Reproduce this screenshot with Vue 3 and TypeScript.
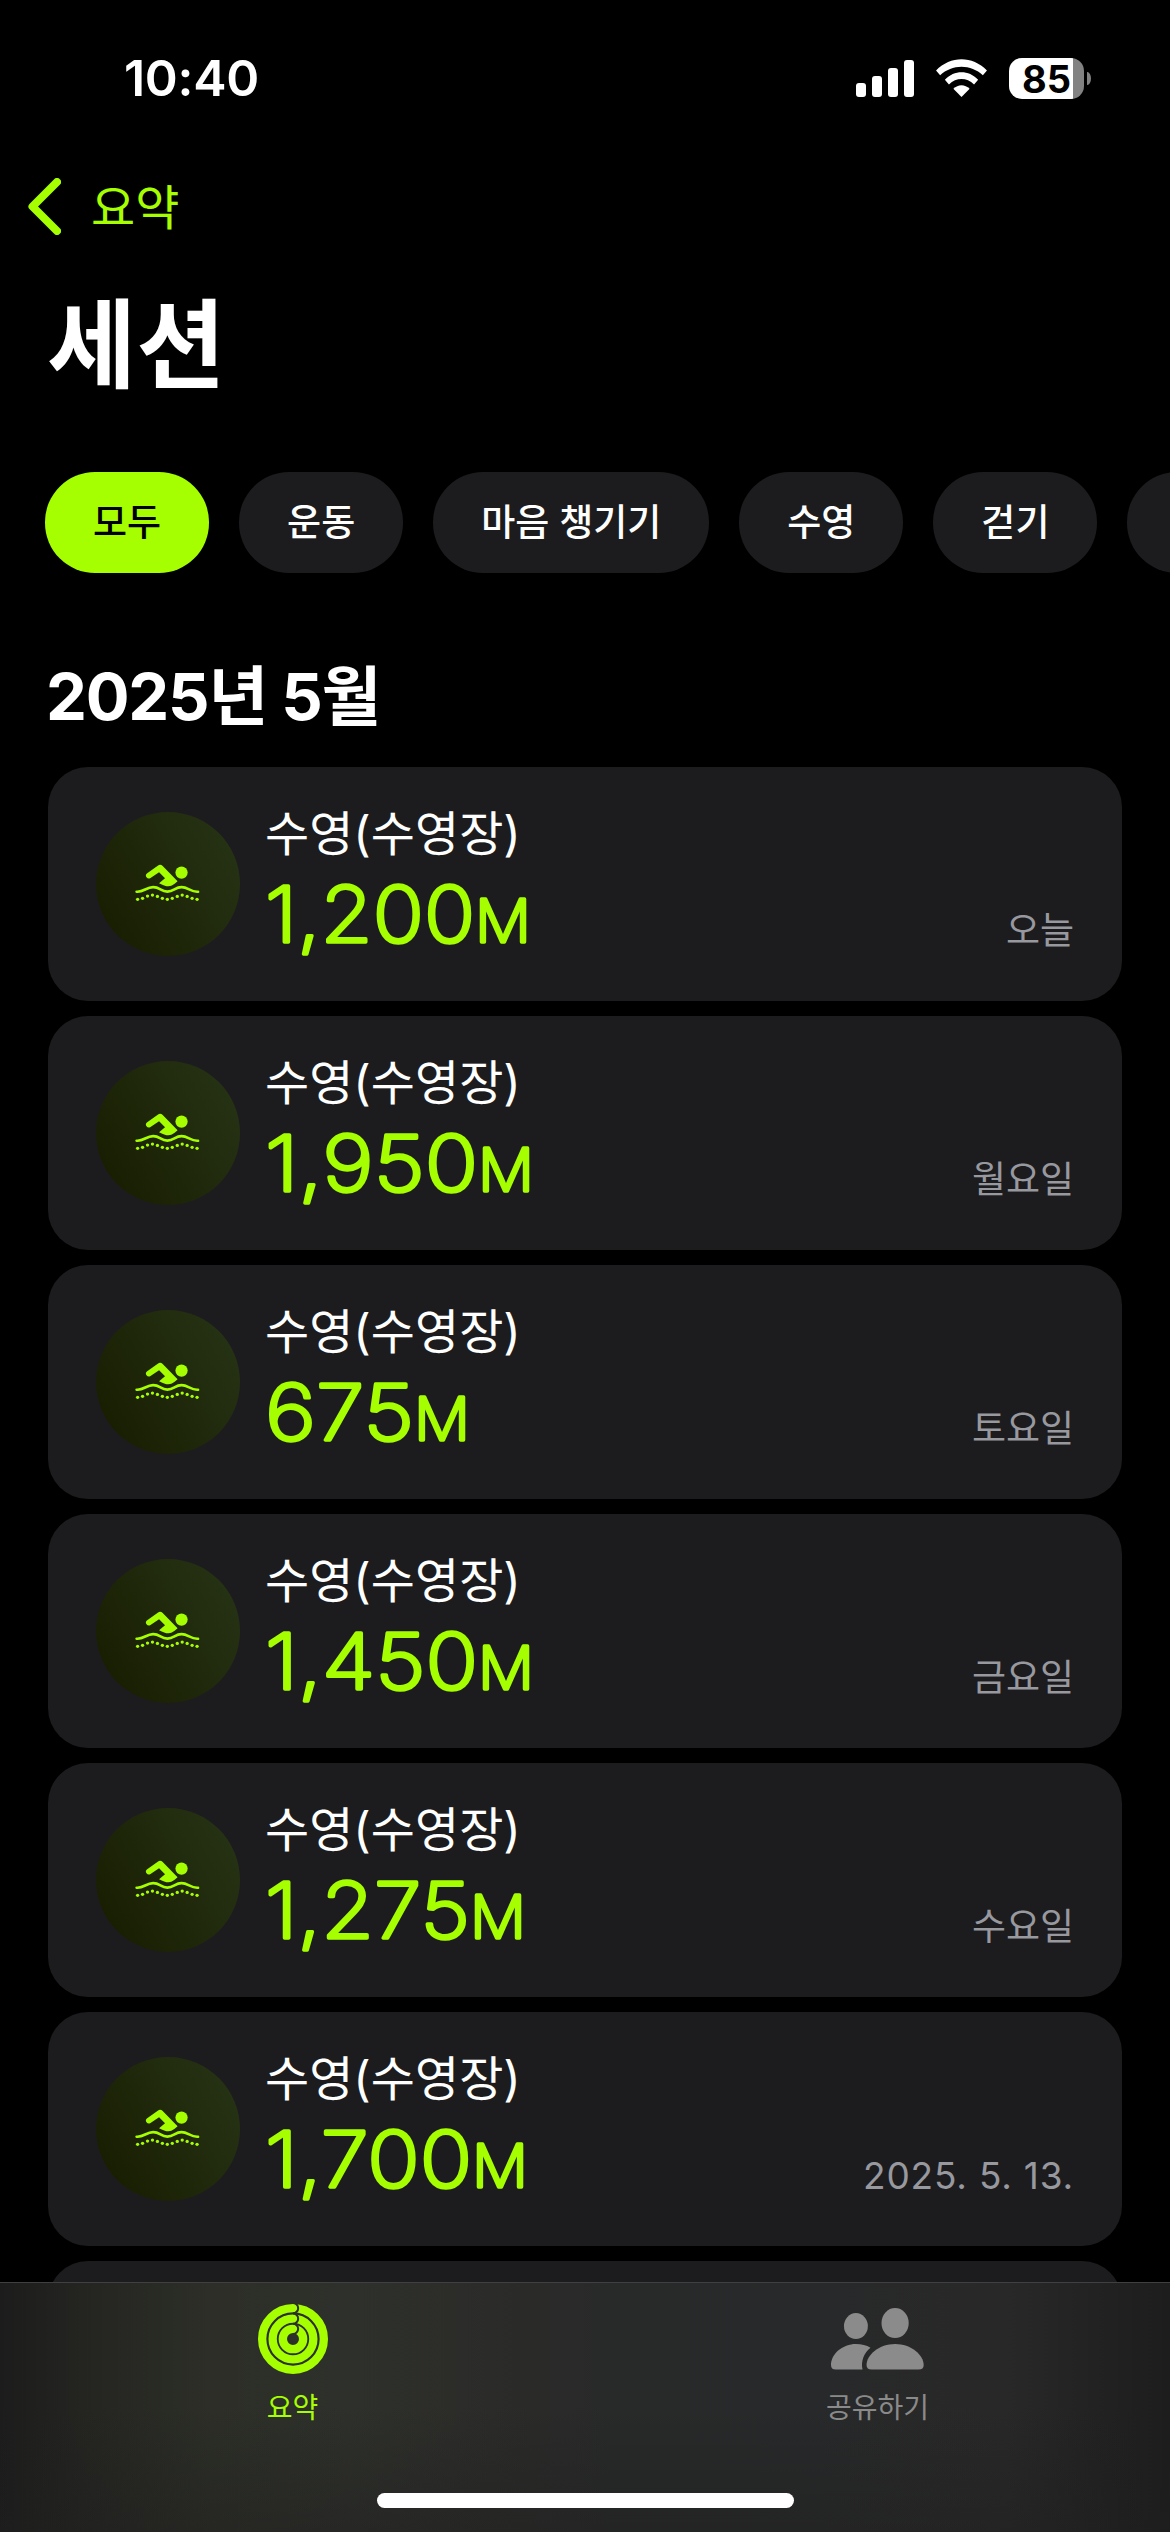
<script setup lang="ts">
interface Session {
  distance: string
  // Drawn width of the number, before the unit
  width: number
  date: string
}

const filters: string[] = ['모두', '운동', '마음 챙기기', '수영', '걷기']

const sessions: Session[] = [
  { distance: '1,200', width: 210, date: '오늘' },
  { distance: '1,950', width: 213, date: '월요일' },
  { distance: '675', width: 149, date: '토요일' },
  { distance: '1,450', width: 213, date: '금요일' },
  { distance: '1,275', width: 205, date: '수요일' },
  { distance: '1,700', width: 207, date: '2025. 5. 13.' },
]

// Dotted second wave below the swimmer: one dot every 15 units
const dotHeights: number[] = [297, 294, 287, 284, 288, 294, 297, 294, 288, 284, 288, 294, 297]
</script>

<template>
  <div class="screen">
    <header class="status">
      <span class="clock">10:40</span>
      <div class="indicators">
        <svg class="signal" viewBox="0 0 58 38">
          <rect x="0" y="24" width="10" height="14" rx="3" />
          <rect x="16" y="17" width="10" height="21" rx="3" />
          <rect x="32" y="9" width="10" height="29" rx="3" />
          <rect x="48" y="1" width="10" height="37" rx="3" />
        </svg>
        <svg class="wifi" viewBox="0 0 150 112">
          <path d="M0 34C43 -10 107 -10 150 34L138 48C103 14 47 14 12 48Z" />
          <path d="M26 61C54 32 96 32 124 61L112 75C90 54 60 54 38 75Z" />
          <path d="M51 88C65 74 85 74 99 88L75 112Z" />
        </svg>
        <div class="battery">
          <div class="cell">85</div>
          <span class="nub"></span>
        </div>
      </div>
    </header>

    <nav class="back">
      <svg viewBox="0 0 33 57"><path d="M29 4L4.5 28.5L29 53" /></svg>
      <span>요약</span>
    </nav>

    <h1 class="title">세션</h1>

    <div class="filters">
      <button v-for="(name, i) in filters" :key="name" class="chip" :class="{ active: i === 0 }">
        {{ name }}
      </button>
      <span class="chip next"></span>
    </div>

    <main class="content">
      <h2 class="month">2025년 5월</h2>
      <ul class="list">
        <li v-for="s in sessions" :key="s.date" class="card">
          <div class="badge">
            <svg viewBox="135 190 195 112">
              <circle cx="275" cy="216" r="18.5" />
              <path d="M171 218L203 195Q211 189 218 196L263 242Q255 250 244 256Q230 261 207 248L225 233L207 215L181 232A8.5 8.5 0 0 1 171 218Z" />
              <path class="wave" d="M139 274C160 276 168 260 189 260S212 273.5 232 273.5S255 260 275 260S303 276 325 274" />
              <circle v-for="(y, i) in dotHeights" :key="i" :cx="142 + i * 15" :cy="y" r="5" />
            </svg>
          </div>
          <div class="info">
            <div class="name">수영(수영장)</div>
            <svg class="distance" viewBox="0 0 400 100">
              <text x="0" y="78" :textLength="s.width" lengthAdjust="spacingAndGlyphs">{{ s.distance }}</text>
              <text class="unit" :x="s.width" y="78" textLength="56" lengthAdjust="spacingAndGlyphs">M</text>
            </svg>
          </div>
          <div class="date" :class="{ numeric: s.date.startsWith('2') }">{{ s.date }}</div>
        </li>
        <li class="card"></li>
      </ul>
    </main>

    <footer class="tabbar">
      <div class="tabs">
        <div class="tab selected">
          <svg class="rings" viewBox="0 0 210 210">
            <mask id="ring-gaps">
              <rect width="210" height="210" fill="#fff" />
              <path
                d="M105 -3A15.5 15.5 0 0 1 105 28M105 28.5A15.5 15.5 0 0 1 105 59.5M105 59A15.5 15.5 0 0 1 105 90"
                fill="none"
                stroke="#000"
                stroke-width="6"
              />
            </mask>
            <g mask="url(#ring-gaps)" fill="none" stroke="#a6ff00" stroke-width="25">
              <circle cx="105" cy="105" r="92.5" />
              <circle cx="105" cy="105" r="61" />
              <circle cx="105" cy="105" r="30.5" />
            </g>
          </svg>
          <span>요약</span>
        </div>
        <div class="tab">
          <svg class="people" viewBox="90 84 280 186">
            <ellipse cx="165" cy="138" rx="36" ry="39" />
            <ellipse cx="283" cy="129" rx="41" ry="45" />
            <path d="M90 255C90 222 125 192 165 192C182 192 197 196 209 203C190 217 179 243 185 269H104Q90 269 90 255Z" />
            <path d="M197 255C197 225 235 192 283 192S369 225 369 255Q369 269 354 269H212Q197 269 197 255Z" />
          </svg>
          <span>공유하기</span>
        </div>
      </div>
      <div class="home"></div>
    </footer>
  </div>
</template>

<style>
body {
  background: #000;
}
</style>

<style scoped>
.screen {
  width: 1170px;
  height: 2532px;
  overflow: hidden;
  display: flex;
  flex-direction: column;
  background: #000;
  color: #fff;
  font-family: Inter, "Noto Sans CJK KR", sans-serif;
}

.status {
  height: 156px;
  flex: none;
  box-sizing: border-box;
  padding: 0 79px 0 124px;
  display: flex;
  justify-content: space-between;
  align-items: center;
}
.clock {
  font-size: 50px;
  font-weight: 600;
  letter-spacing: -0.3px;
}
.indicators {
  display: flex;
  align-items: center;
}
.signal {
  width: 58px;
  height: 38px;
  margin-right: 22px;
  fill: #fff;
}
.wifi {
  width: 51px;
  height: 38px;
  margin-right: 22px;
  fill: #fff;
}
.battery {
  display: flex;
  align-items: center;
  gap: 3px;
}
.cell {
  width: 75px;
  height: 41px;
  border-radius: 13px;
  background: linear-gradient(to right, #fff 64px, #828282 64px);
  color: #000;
  font-size: 38px;
  font-weight: 700;
  line-height: 42px;
  text-align: center;
}
.nub {
  width: 4px;
  height: 13px;
  border-radius: 0 4px 4px 0 / 0 7px 7px 0;
  background: #828282;
}

.back {
  height: 100px;
  flex: none;
  display: flex;
  align-items: center;
  padding-left: 28px;
  gap: 30px;
  color: #a6ff00;
  font-size: 48px;
}
.back span {
  margin-bottom: 5px;
}
.back svg {
  width: 33px;
  height: 57px;
  fill: none;
  stroke: #a6ff00;
  stroke-width: 8;
  stroke-linecap: round;
  stroke-linejoin: round;
}

.title {
  flex: none;
  height: 216px;
  margin: 0;
  padding-left: 47px;
  box-sizing: border-box;
  font-size: 97px;
  line-height: 177px;
  font-weight: 700;
}

.filters {
  flex: none;
  display: flex;
  gap: 30px;
  padding-left: 45px;
  height: 101px;
}
.chip {
  flex: none;
  box-sizing: border-box;
  height: 101px;
  padding: 0 48px;
  border: 0;
  border-radius: 50px;
  background: #1c1c1e;
  color: #fff;
  font: 500 37px/101px Inter, "Noto Sans CJK KR", sans-serif;
}
.chip.active {
  background: #a6ff00;
  color: #000;
}
.chip.next {
  width: 198px;
}

.content {
  flex: 1;
  min-height: 0;
  overflow: hidden;
}
.month {
  margin: 0;
  height: 194px;
  padding-left: 46px;
  font-size: 65px;
  line-height: 247px;
  font-weight: 700;
  letter-spacing: -1.2px;
}
.list {
  margin: 0;
  padding: 0 48px;
  list-style: none;
  display: flex;
  flex-direction: column;
  gap: 15px;
}
.card {
  height: 234px;
  flex: none;
  box-sizing: border-box;
  padding: 0 48px;
  border-radius: 40px;
  background: #1c1c1e;
  display: flex;
  align-items: center;
}
.badge {
  width: 144px;
  height: 144px;
  border-radius: 50%;
  background: linear-gradient(60deg, #181d00 8%, #263214 88%);
  display: flex;
  align-items: center;
  justify-content: center;
}
.badge svg {
  width: 65px;
  height: 37px;
  margin: 0 1px 3px 0;
  fill: #a6ff00;
}
.badge .wave {
  fill: none;
  stroke: #a6ff00;
  stroke-width: 8;
  stroke-linecap: round;
}
.info {
  flex: 1;
  margin-left: 25px;
}
.name {
  font-size: 48px;
  line-height: 60px;
  margin-top: -1px;
}
.distance {
  display: block;
  width: 400px;
  height: 100px;
  overflow: visible;
}
.distance text {
  font-size: 77px;
  font-weight: 200;
  fill: #a6ff00;
  stroke: #a6ff00;
  stroke-width: 3.4;
  stroke-linejoin: round;
}
.distance .unit {
  font-size: 59px;
}
.date {
  align-self: flex-end;
  margin-bottom: 45px;
  color: #98989f;
  font-size: 37px;
  line-height: 50px;
}
.date.numeric {
  letter-spacing: 0.8px;
}

.tabbar {
  flex: none;
  height: 250px;
  box-sizing: border-box;
  border-top: 1px solid #404042;
  background:
    linear-gradient(to bottom, transparent 50%, rgba(30, 30, 30, 0.45)),
    linear-gradient(to right, #1c1c1c 0, #242521 7%, #2c2e27 18%, #2e302b 30%, #2b2c29 42%, #282929 52%, #28292a 70%, #282828 86%, #1d1d1d 100%);
  display: flex;
  flex-direction: column;
  align-items: center;
}
.tabs {
  width: 100%;
  height: 210px;
  display: flex;
}
.tab {
  flex: 1;
  display: flex;
  flex-direction: column;
  align-items: center;
  color: #8a8a8a;
  font-size: 28px;
}
.tab.selected {
  color: #a6ff00;
}
.rings {
  width: 70px;
  height: 70px;
  margin: 21px 0 14px;
}
.people {
  width: 93px;
  height: 62px;
  margin: 25px 0 18px;
  fill: #8a8b8a;
}
.tab span {
  line-height: 40px;
}
.home {
  width: 417px;
  height: 15px;
  border-radius: 8px;
  background: #fff;
}
</style>
